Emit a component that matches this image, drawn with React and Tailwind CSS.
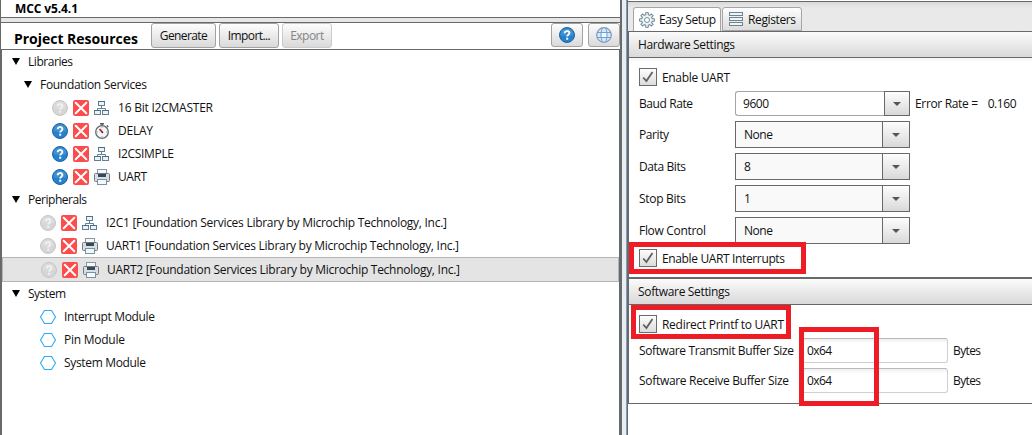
import { useLayoutEffect, useRef, useState } from "react";

// Text that spreads its letter spacing to span a given width.
function T({ w, className = "", children }) {
  const ref = useRef(null);
  const [spacing, setSpacing] = useState(0);
  useLayoutEffect(() => {
    const natural = ref.current.getBoundingClientRect().width;
    const gaps = String(children).length - 1;
    setSpacing(gaps > 0 ? (w - natural) / gaps : 0);
  }, [w, children]);
  return (
    <span ref={ref} className={`shrink-0 whitespace-pre ${className}`} style={{ letterSpacing: `${spacing}px` }}>
      {children}
    </span>
  );
}

function Help({ disabled, className = "" }) {
  const ring = disabled ? "#c6c6c6" : "#1c65a8";
  const fill = disabled ? "#d6d6d6" : "#2581cc";
  return (
    <svg viewBox="0 0 16 16" className={`size-4 shrink-0 ${className}`}>
      <circle cx="8" cy="8" r="7.5" fill={fill} stroke={ring} />
      <path d="M1.2 8a6.8 6.8 0 0 1 13.6 0Q8 10 1.2 8z" fill="#fff" opacity=".12" />
      <path d="M5.7 6.2C5.7 3.4 10.4 3.4 10.4 6c0 1.7-2.2 1.7-2.2 3.5" fill="none" stroke={disabled ? "#f2f2f2" : "#fff"} strokeWidth="1.9" />
      <rect x="7.2" y="10.7" width="2" height="2" fill={disabled ? "#f2f2f2" : "#fff"} />
    </svg>
  );
}

function Remove() {
  return (
    <svg viewBox="0 0 16 16" className="ml-[5px] size-4 shrink-0">
      <rect width="16" height="16" rx="2" fill="#fc4c4c" />
      <path d="M2.7 2.7l10.6 10.6M13.3 2.7L2.7 13.3" stroke="#fff" strokeWidth="2" strokeLinecap="round" />
    </svg>
  );
}

function Net() {
  return (
    <svg viewBox="0 0 16 16" className="ml-[5px] size-4 shrink-0" fill="none" stroke="#64808f">
      <path d="M7.500 6v3M3.500 10.500V8.500H11.500V10.500" />
      <rect x="4.500" y="1.500" width="6" height="4" fill="#e8f3f9" />
      <rect x=".5" y="10.500" width="6" height="4" fill="#e8f3f9" />
      <rect x="8.500" y="10.500" width="6" height="4" fill="#e8f3f9" />
      <path d="M4 1.500h7M0 10.500h7M8 10.500h7" stroke="#4a6e87" />
    </svg>
  );
}

function Clock() {
  return (
    <svg viewBox="0 0 16 16" className="ml-[5px] size-4 shrink-0">
      <path d="M6 .8h4M8 .8v2M12.800 2.500l1.500 1.500" stroke="#555d63" strokeWidth="1.500" />
      <circle cx="8" cy="9" r="6.300" fill="#f3f6f7" stroke="#626b71" strokeWidth="1.300" />
      <path d="M8 4v1M8 13v1M3 9h1M12 9h1" stroke="#9aa" />
      <path d="M5.500 6l2.800 3.200" stroke="#c8202c" strokeWidth="1.800" />
      <circle cx="8.400" cy="9.300" r=".9" fill="#4a2a2e" />
    </svg>
  );
}

function Printer() {
  return (
    <svg viewBox="0 0 16 16" className="ml-[5px] size-4 shrink-0">
      <rect x="3.500" y=".5" width="9" height="5" fill="#f4fafc" stroke="#86979f" />
      <rect x=".5" y="4.500" width="15" height="8" rx="1" fill="#d9dee2" stroke="#74797e" />
      <rect x="4" y="5" width="8" height="3" fill="#34495e" />
      <rect x="3.500" y="10.500" width="9" height="5" fill="#eefafd" stroke="#7e929b" />
    </svg>
  );
}

function Hex() {
  return (
    <svg viewBox="0 0 16 16" className="mr-2 size-4 shrink-0">
      <path d="M4.500 1.500h7L15.500 8l-4 6.500h-7L.5 8z" fill="none" stroke="#27aef2" strokeWidth="1.100" />
    </svg>
  );
}

function Gear() {
  const teeth = Array.from({ length: 8 }, (_, i) => i * 45);
  return (
    <svg viewBox="0 0 16 16" className="size-4 shrink-0">
      <circle cx="8" cy="8" r="5.400" fill="#edf4f8" stroke="#6f8794" />
      {teeth.map((a) => (
        <path key={a} d="M6.700 3.500V.6h2.600v2.900" transform={`rotate(${a} 8 8)`} fill="#edf4f8" stroke="#6f8794" />
      ))}
      <circle cx="8" cy="8" r="4.700" fill="#edf4f8" />
      <circle cx="8" cy="8" r="2.500" fill="#fff" stroke="#7d929d" />
    </svg>
  );
}

function RegistersIcon() {
  return (
    <svg viewBox="0 0 14 16" className="h-4 w-3.5 shrink-0" fill="#edf4f7" stroke="#70838e">
      <rect x=".5" y="1.500" width="13" height="3" />
      <rect x=".5" y="6.500" width="13" height="3" />
      <rect x=".5" y="11.500" width="13" height="3" />
    </svg>
  );
}

function Globe() {
  return (
    <svg viewBox="0 0 16 16" className="size-4" fill="none" stroke="#6f9fd6">
      <circle cx="8" cy="8" r="7.300" fill="#d6e8f9" stroke="#8399b0" strokeWidth="1.200" />
      <rect x="5.500" y="5.500" width="5" height="5" fill="#f2f8fd" stroke="none" />
      <path d="M6.500 1C4.500 5 4.500 11 6.500 15M9.500 1c2 4 2 10 0 14M1.500 5.500h13M1.500 10.500h13" />
    </svg>
  );
}

function Group({ label, w, nested }) {
  return (
    <div className={`flex h-[23px] items-center ${nested ? "pl-[22px]" : "pl-[10px]"}`}>
      <svg viewBox="0 0 8 7" className="mr-2 h-[7px] w-2">
        <path d="M0 0h8L4 7z" fill="#000" />
      </svg>
      <T w={w}>{label}</T>
    </div>
  );
}

function Item({ label, w, icon: Icon, disabled, deep, selected }) {
  const box = selected
    ? "h-[25px] border border-[#b5b5b5] bg-[#e4e4e4] pl-[38px]"
    : deep
      ? "h-[23px] pl-[50px]"
      : "h-[23px] pl-[38px]";
  return (
    <div className={`flex items-center ${box}`}>
      <Help disabled={disabled} />
      <Remove />
      <Icon />
      <T w={w} className="ml-2">{label}</T>
    </div>
  );
}

function Module({ label, w }) {
  return (
    <div className="flex h-[23px] items-center pl-[38px]">
      <Hex />
      <T w={w}>{label}</T>
    </div>
  );
}

function Button({ className = "", children }) {
  return (
    <button className={`flex shrink-0 items-center justify-center rounded-[3px] border bg-linear-to-b from-[#fdfdfd] to-[#dadada] ${className}`}>
      {children}
    </button>
  );
}

function SectionHeader({ label, w }) {
  return (
    <div className="flex h-[26px] shrink-0 items-center border-b border-[#66676a] bg-linear-to-b from-[#fbfbfb] to-[#d9d9d9] pl-[9px]">
      <T w={w}>{label}</T>
    </div>
  );
}

function Check({ label, w }) {
  return (
    <label className="flex h-[18px] items-center pl-[10px]">
      <span className="mr-[5px] flex size-[18px] items-center justify-center border border-[#6b6b6b] bg-linear-to-b from-[#fdfdfd] to-[#dcdcdc]">
        <svg viewBox="0 0 12 12" className="size-3">
          <path d="M1.200 6.500l3.200 3.500L10.500 1" fill="none" stroke="#5f5f5f" strokeWidth="1.800" />
        </svg>
      </span>
      <T w={w} className="pt-0.5">{label}</T>
    </label>
  );
}

function Arrow() {
  return (
    <svg viewBox="0 0 8 4" className="h-1 w-2">
      <path d="M0 0h8L4 4z" fill="#555" />
    </svg>
  );
}

function SelectRow({ label, w, value, vw }) {
  return (
    <div className="mb-[5px] flex h-[27px] items-center pl-[10px]">
      <div className="flex w-24 shrink-0"><T w={w}>{label}</T></div>
      <div className="flex h-[27px] w-[175px] border border-[#68696b] bg-[#f9f9f9]">
        <div className="flex flex-1 items-center pl-2"><T w={vw}>{value}</T></div>
        <div className="flex w-[27px] items-center justify-center border-l border-[#68696b] bg-linear-to-b from-[#fdfdfd] to-[#d9d9d9]">
          <Arrow />
        </div>
      </div>
    </div>
  );
}

function SizeRow({ label, w }) {
  return (
    <div className="mb-[5px] flex h-[25px] items-center pl-[10px]">
      <div className="flex w-[163px] shrink-0"><T w={w}>{label}</T></div>
      <div className="mr-[5px] flex h-[25px] w-[146px] items-center rounded-[3px] border border-[#cfcfcf] border-t-[#b8b8b8] bg-linear-to-b from-[#f0f0f0] to-white to-20% pl-1">
        <T w={25}>0x64</T>
      </div>
      <T w={28}>Bytes</T>
    </div>
  );
}

export default function App() {
  return (
    <div className="relative flex h-[435px] w-[1032px] overflow-hidden bg-white font-['Open_Sans','Noto_Sans',sans-serif] text-[12px] leading-4 text-[#111]">
      <section className="flex w-[622px] shrink-0 flex-col border-r-2 border-l border-[#68696b]">
        <div className="flex h-[17px] shrink-0 items-center pl-3.5">
          <T w={63} className="font-bold text-black">MCC v5.4.1</T>
        </div>
        <div className="h-[6px] shrink-0 border-y border-[#68696b] bg-[#e6e6e6]" />
        <div className="flex h-[27px] shrink-0 items-start border-b border-[#68696b]">
          <T w={124} className="mt-[6px] ml-[13px] text-[14px] leading-5 font-bold text-black">Project Resources</T>
          <Button className="ml-[13px] h-[25px] w-[65px] border-[#a2a2a2]"><T w={48}>Generate</T></Button>
          <Button className="ml-[3px] h-[25px] w-[60px] border-[#a2a2a2]"><T w={43}>Import...</T></Button>
          <Button className="ml-[3px] h-[25px] w-[50px] border-[#cbcbcb] text-[#858585]"><T w={34}>Export</T></Button>
          <Button className="ml-auto h-6 w-8 border-[#a2a2a2]"><Help /></Button>
          <Button className="ml-[5px] h-6 w-8 border-[#a2a2a2]"><Globe /></Button>
        </div>
        <div className="flex-1 border-r border-l border-[#68696b]">
          <Group label="Libraries" w={45} />
          <Group label="Foundation Services" w={107} nested />
          <Item label="16 Bit I2CMASTER" w={95} icon={Net} disabled deep />
          <Item label="DELAY" w={35} icon={Clock} deep />
          <Item label="I2CSIMPLE" w={56} icon={Net} deep />
          <Item label="UART" w={29} icon={Printer} deep />
          <Group label="Peripherals" w={59} />
          <Item label="I2C1 [Foundation Services Library by Microchip Technology, Inc.]" w={341} icon={Net} disabled />
          <Item label="UART1 [Foundation Services Library by Microchip Technology, Inc.]" w={353} icon={Printer} disabled />
          <Item label="UART2 [Foundation Services Library by Microchip Technology, Inc.]" w={353} icon={Printer} disabled selected />
          <Group label="System" w={38} />
          <Module label="Interrupt Module" w={91} />
          <Module label="Pin Module" w={61} />
          <Module label="System Module" w={82} />
        </div>
      </section>

      <div className="w-[5px] shrink-0 border-r border-[#7f9fbd] bg-[#e9eef5]" />

      <section className="flex min-w-0 flex-1 flex-col border-l border-[#68696b] pt-px">
        <div className="flex h-[30px] shrink-0 items-end border-t border-[#68696b] bg-linear-to-b from-[#d8dad8] to-[#e9e9e9] to-20% pl-[5px]">
          <div className="flex h-6 w-[88px] items-center rounded-t-[3px] border border-b-0 border-[#a5a5a5] bg-white pl-[5px]">
            <Gear /><T w={57} className="ml-1 pt-px">Easy Setup</T>
          </div>
          <div className="ml-px flex h-6 w-20 items-center rounded-t-[3px] border border-[#a5a5a5] bg-linear-to-b from-[#fdfdfd] to-[#dddddd] pl-[6px]">
            <RegistersIcon /><T w={48} className="ml-[5px] pt-0.5">Registers</T>
          </div>
        </div>
        <div className="flex h-[373px] shrink-0 flex-col border-y border-l border-[#68696b]">
          <SectionHeader label="Hardware Settings" w={97} />
          <div className="flex h-[219px] shrink-0 flex-col bg-linear-to-b from-[#f3f6f3] to-white to-2% pt-[10px]">
            <Check label="Enable UART" w={68} />
            <div className="mt-[5px] mb-[5px] flex h-[25px] shrink-0 items-center pl-[10px]">
              <div className="flex w-24 shrink-0"><T w={54}>Baud Rate</T></div>
              <div className="flex h-[25px] w-[149px] items-center rounded-l-[3px] border border-r-0 border-[#a5a5a5] bg-white pl-[7px]"><T w={26}>9600</T></div>
              <div className="mr-[5px] flex h-[25px] w-[26px] items-center justify-center border border-[#68696b] bg-linear-to-b from-[#fdfdfd] to-[#d9d9d9]"><Arrow /></div>
              <T w={63}>Error Rate =</T>
              <T w={29} className="ml-[10px]">0.160</T>
            </div>
            <SelectRow label="Parity" w={30} value="None" vw={29} />
            <SelectRow label="Data Bits" w={47} value="8" vw={7} />
            <SelectRow label="Stop Bits" w={47} value="1" vw={7} />
            <SelectRow label="Flow Control" w={67} value="None" vw={29} />
            <Check label="Enable UART Interrupts" w={123} />
          </div>
          <div className="h-0.5 shrink-0 bg-[#68696b]" />
          <SectionHeader label="Software Settings" w={92} />
          <div className="flex flex-col pt-[10px]">
            <Check label="Redirect Printf to UART" w={122} />
            <div className="h-[5px]" />
            <SizeRow label="Software Transmit Buffer Size" w={155} />
            <SizeRow label="Software Receive Buffer Size" w={150} />
          </div>
        </div>
      </section>

      <div className="absolute top-[242px] left-[629px] h-8 w-[177px] border-5 border-[#ee1c24]" />
      <div className="absolute top-[305px] left-[631px] h-[34px] w-40 border-5 border-[#ee1c24]" />
      <div className="absolute top-[327px] left-[799px] h-[79px] w-20 border-5 border-[#ee1c24]" />
    </div>
  );
}
